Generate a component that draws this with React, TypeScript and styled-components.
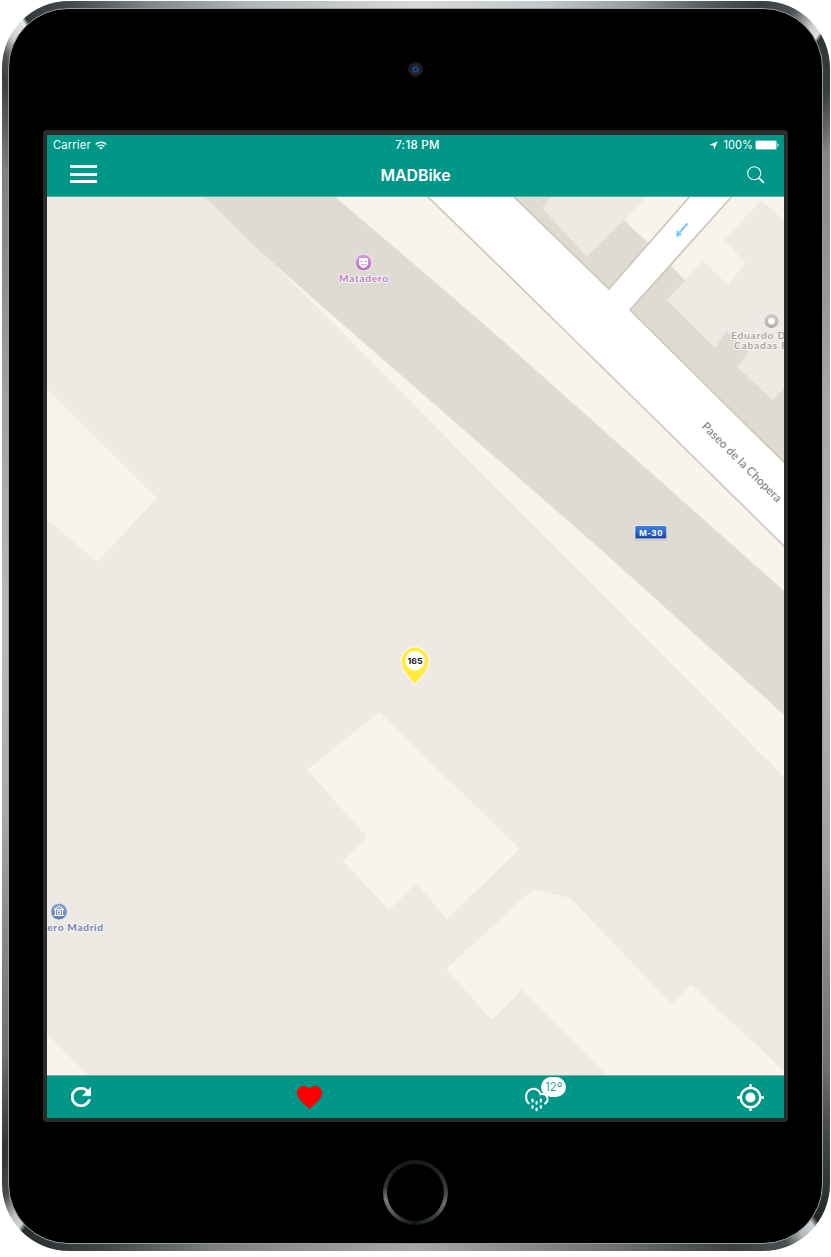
import React from "react";
import styled, { createGlobalStyle } from "styled-components";

const GlobalStyle = createGlobalStyle`
  html, body { margin: 0; background: #fff; }
  * { box-sizing: border-box; }
`;

const TEAL = "#009688";
const UI_FONT = `Inter, Roboto, "Liberation Sans", sans-serif`;

const Page = styled.main`
  width: 831px;
  height: 1257px;
  padding: 1px 1.5px 6px;
  overflow: hidden;
  background: #fff;
  font-family: ${UI_FONT};
`;

const Device = styled.div`
  width: 828px;
  height: 1250px;
  padding: 7px 6.5px;
  border-radius: 67px;
  background: conic-gradient(
    from 0deg at 50% 50%,
    #d6d8d9 0deg, #c4c7c9 12deg, #9a9ea0 19deg, #565b5e 25deg, #3a3f42 29deg,
    #4b5053 31.5deg, #c9ccce 33.4deg, #dfe2e3 34.2deg, #2f3437 34.5deg, #373c3f 37.5deg,
    #85898c 41deg, #a5a8aa 60deg, #b5b8ba 90deg, #9fa2a4 120deg, #6d7174 137deg,
    #3a3f42 142deg, #23282b 146deg, #d0d3d5 146.5deg, #b4b8ba 147.6deg, #4b5053 149deg,
    #3b4043 153deg, #6d7173 162deg, #a6a9aa 180deg, #7d8183 198deg, #3f4447 207deg,
    #272c2f 213deg, #d0d3d5 213.4deg, #c0c4c6 214.2deg, #454a4d 215.8deg, #2e3336 218deg,
    #6d7174 224deg, #a5a8aa 245deg, #b9bcbe 270deg, #9da1a3 300deg, #7d8184 318deg,
    #3a3f42 323deg, #4f5457 324.3deg, #cfd2d4 325.6deg, #e4e7e8 327deg, #33383b 327.3deg,
    #43484b 331deg, #84888b 337deg, #b4b7b9 345deg, #d6d8d9 360deg
  );
`;

const Glass = styled.div`
  height: 100%;
  border: 1px solid #9b9ea0;
  border-radius: 60px;
  background: #000;
  display: flex;
  flex-direction: column;
  align-items: center;
`;

const CameraArea = styled.div`
  height: 121px;
  padding-top: 53px;
  flex: none;
`;

const Camera = styled.div`
  width: 15px;
  height: 15px;
  border-radius: 50%;
  background: radial-gradient(circle, #0b1a3c 0 1px, #1f4fae 2px, #17263f 3.5px, #26292c 4.5px, #141618 6px, #1b1d1e 7px);
`;

const Bezel = styled.div`
  width: 745px;
  height: 992px;
  flex: none;
  padding: 5px 4px 4px;
  border-radius: 4px;
  background: #2b2b2b;
`;

const Screen = styled.div`
  width: 737px;
  height: 983px;
  display: flex;
  flex-direction: column;
  overflow: hidden;
  background: ${TEAL};
`;

const StatusBar = styled.div`
  height: 20px;
  padding: 0 5px 0 6px;
  display: grid;
  grid-template-columns: 1fr auto 1fr;
  align-items: center;
  color: #fff;
  font-size: 11.1px;
  letter-spacing: 0.2px;
  flex: none;
`;

const StatusGroup = styled.div<{ $end?: boolean }>`
  display: flex;
  align-items: center;
  gap: ${(p) => (p.$end ? "2px" : "4px")};
  justify-content: ${(p) => (p.$end ? "flex-end" : "flex-start")};
`;

const Clock = styled.span`
  font-weight: 500;
  font-size: 11.5px;
  letter-spacing: 0.3px;
  padding-left: 3px;
`;

const Percent = styled.span`
  margin-left: 4px;
  letter-spacing: 0;
`;

const NavBar = styled.header`
  height: 42px;
  flex: none;
  padding: 0 19px 3px;
  display: grid;
  grid-template-columns: 1fr auto 1fr;
  align-items: center;
  color: #fff;
  border-bottom: 1px solid #5faea4;
`;

const NavTitle = styled.h1`
  margin: 0;
  padding-top: 2px;
  font-size: 15.8px;
  font-weight: 600;
  letter-spacing: 0;
`;

const MenuButton = styled.button`
  width: 27px;
  height: 18px;
  margin: 0 0 0 4px;
  padding: 0;
  border: 0;
  background: none;
  display: flex;
  flex-direction: column;
  justify-content: space-between;
`;

const MenuLine = styled.span`
  width: 27px;
  height: 3px;
  background: #fff;
`;

const IconButton = styled.button<{ $end?: boolean }>`
  padding: 0;
  border: 0;
  background: none;
  display: flex;
  justify-self: ${(p) => (p.$end ? "end" : "start")};
`;

const MapView = styled.svg`
  display: block;
  width: 737px;
  height: 878px;
  flex: none;
`;

const ToolBar = styled.footer`
  height: 43px;
  flex: none;
  padding: 0 20px 0 24px;
  display: grid;
  grid-template-columns: 226px 228px auto 1fr;
  align-items: center;
  background: ${TEAL};
  border-top: 1px solid #6fb0a6;
`;

const WeatherButton = styled(IconButton)`
  position: relative;
  width: 41px;
  height: 42px;
  align-items: flex-start;
`;

const TempBadge = styled.span`
  position: absolute;
  top: 1px;
  right: 0;
  width: 25px;
  height: 19.5px;
  border-radius: 10px;
  background: #fff;
  color: ${TEAL};
  font: 300 12px/19.5px ${UI_FONT};
  text-align: center;
`;

const HomeArea = styled.div`
  flex: 1;
  padding-top: 38px;
`;

const HomeButton = styled.div`
  width: 65px;
  height: 65px;
  border-radius: 50%;
  padding: 4px;
  background: conic-gradient(#15181a 0deg, #1d2022 40deg, #3a3e41 85deg, #6b6f72 112deg, #3a3e41 140deg, #22282b 165deg, #101315 182deg, #24282b 200deg, #5c6063 235deg, #777b7e 255deg, #34383b 280deg, #1a1d1f 320deg, #15181a 360deg);
`;

const HomeFace = styled.div`
  height: 100%;
  border-radius: 50%;
  background: #000;
`;

const WifiIcon = () => (
  <svg width="12" height="9" viewBox="0 0 12 9" fill="none" stroke="#fff">
    <path d="M.7 3.4a7.6 7.6 0 0 1 10.6 0" strokeWidth="1.4" />
    <path d="M2.7 5.5a4.8 4.8 0 0 1 6.6 0" strokeWidth="1.4" />
    <path d="M6 8.8 4.1 6.9a2.8 2.8 0 0 1 3.8 0z" fill="#fff" stroke="none" />
  </svg>
);

const LocationArrow = () => (
  <svg width="9" height="9" viewBox="0 0 9 9">
    <path d="M8.8.2 5 8.8 4.6 4.5.2 4.1z" fill="#fff" />
  </svg>
);

const Battery = () => (
  <svg width="24" height="10" viewBox="0 0 24 10">
    <rect x=".4" y=".4" width="21.4" height="9.2" rx="1.8" fill="none" stroke="#fff" strokeOpacity=".65" strokeWidth=".7" />
    <rect x="1" y="1" width="20.2" height="8" rx="1.2" fill="#fff" />
    <path d="M22.5 3.4q1.2.4 1.2 1.6t-1.2 1.6z" fill="#fff" />
  </svg>
);

const SearchIcon = () => (
  <svg width="18" height="19" viewBox="0 -1 18 19" fill="none" stroke="#fff">
    <circle cx="7.2" cy="7.2" r="6.5" strokeWidth="1.1" />
    <path d="m11.8 11.8 5.1 5.1" strokeWidth="1.9" />
  </svg>
);

const RefreshIcon = () => (
  <svg width="20" height="20" viewBox="4 4 16 16">
    <path fill="#fff" stroke="#fff" strokeWidth=".3" d="M17.65 6.35C16.2 4.9 14.21 4 12 4c-4.42 0-7.99 3.58-7.99 8s3.57 8 7.99 8c3.73 0 6.84-2.55 7.73-6h-2.08c-.82 2.33-3.04 4-5.65 4-3.31 0-6-2.69-6-6s2.69-6 6-6c1.66 0 3.14.69 4.22 1.78L13 11h7V4l-2.35 2.35z" />
  </svg>
);

const HeartIcon = () => (
  <svg width="25" height="23" viewBox="2 3 20 18.35">
    <path fill="#f00" d="m12 21.35-1.45-1.32C5.4 15.36 2 12.28 2 8.5 2 5.42 4.42 3 7.5 3c1.74 0 3.41.81 4.5 2.09C13.09 3.81 14.76 3 16.5 3 19.58 3 22 5.42 22 8.5c0 3.78-3.4 6.86-8.55 11.54z" />
  </svg>
);

const RainIcon = () => (
  <svg width="26" height="26" viewBox="0 0 26 26" fill="none" stroke="#fff" strokeWidth="2" strokeLinecap="round">
    <path d="M4.6 17C2.4 15.6 1.2 12.8 1.2 9.9A7.3 7.3 0 0 1 15.5 7.2C19.5 6.3 22.6 8.6 22.6 12.1 22.6 14.3 21.3 16.2 19.4 17" strokeLinecap="butt" />
    <path strokeWidth="2.2" d="M7.5 12.7v1.7M7.5 19v1.7M11.6 15v1.7M11.6 21.5v1.7M15.8 12.7v1.7M15.8 19v1.7" />
  </svg>
);

const RainIconPlace = styled.span`
  display: block;
  padding-top: 11px;
`;

const LocateIcon = () => (
  <svg width="27" height="27" viewBox="0 0 27 27" fill="none" stroke="#fff" strokeWidth="2.3">
    <circle cx="13.5" cy="13.5" r="9.7" />
    <circle cx="13.5" cy="13.5" r="5" fill="#fff" stroke="none" />
    <path d="M13.5 0v4M13.5 23v4M0 13.5h4M23 13.5h4" />
  </svg>
);

const MapLabel = styled.text`
  font-family: Lato, "Open Sans", sans-serif;
  font-weight: 700;
  font-size: 10.2px;
  paint-order: stroke;
  stroke: #f7f4ef;
  stroke-width: 2px;
  stroke-linejoin: round;
`;

const StreetLabel = styled.text`
  font-family: Lato, "Open Sans", sans-serif;
  font-size: 11.8px;
  font-weight: 500;
  fill: #858585;
`;

const ShieldText = styled.text`
  font: 700 9.5px "Liberation Sans", sans-serif;
  text-anchor: middle;
`;

const PinText = styled.text`
  font: 700 7.6px Inter, "Liberation Sans", sans-serif;
  text-anchor: middle;
`;

const CREAM = "#f8f3eb";
const GROUND = "#eee9e2";
const PAVED = "#dedbd2";
const KERB = "#d0c7bc";

const CityMap = () => (
  <MapView viewBox="47 197 737 878">
    <defs>
      <linearGradient id="purple" x1="0" y1="0" x2="0" y2="1">
        <stop offset="0" stopColor="#d59fdb" />
        <stop offset="1" stopColor="#b673c1" />
      </linearGradient>
      <linearGradient id="blue" x1="0" y1="0" x2="0" y2="1">
        <stop offset="0" stopColor="#8fa5d4" />
        <stop offset="1" stopColor="#6079b5" />
      </linearGradient>
      <linearGradient id="grey" x1="0" y1="0" x2="0" y2="1">
        <stop offset="0" stopColor="#cfcdc9" />
        <stop offset="1" stopColor="#b2afaa" />
      </linearGradient>
      <linearGradient id="shield" x1="0" y1="0" x2="0" y2="1">
        <stop offset="0" stopColor="#3b82ee" />
        <stop offset="1" stopColor="#1f449c" />
      </linearGradient>
    </defs>
    <rect x="47" y="196" width="737" height="881" fill={GROUND} />

    <path fill={CREAM} d="M262 252 784 777V196H333z" />
    <path fill={PAVED} stroke="#e2decd" strokeWidth="1.2" d="M204 195 255 246 318 302 600 548 785 715V592.500L592 421 500 339 420 270 332 195z" />

    <path fill={PAVED} d="M513 196 609 289 691 196zM732 196 630 310 785 463V196z" />
    <path fill={CREAM} d="M647 196 624 220 648 243 691 196zM732 196 671 266 685 280 720 300 784 260V196z" />
    <path fill={GROUND} d="M551 196 542 208 587 257 624 220 648 196z" />
    <path fill={GROUND} d="M761 200 725 240 745 263 728 285 703 261 667 300 715 348 727 331 748 352 737 367 773 400 785 387V221z" />
    <path fill="#fff" stroke={KERB} strokeWidth="1.7" d="M426 195 500 267 656 420 786 548V464L741 420 630 310 734 194H692L609 289 512 195z" />

    <path fill={CREAM} d="M47 389 157 498 97 562 47 519zM47 1034 89 1076H47z" />
    <path fill={CREAM} d="M379 712 520 849 447 919 416 883 389 910 343 861 367 837 307 770z" />
    <path fill={CREAM} d="M533 889 570 898 672 1004 691 984 784 1071V1076H607L522 989 492 1020 446 969z" />

    <g fill="#76c8ff" stroke="#76c8ff">
      <path d="m687.5 223.5-8 9" strokeWidth="2" />
      <path d="m676 237 1-7 5 5z" stroke="none" />
    </g>

    <circle cx="363.5" cy="262.5" r="8.8" fill="#f7f0f5" />
    <circle cx="363.5" cy="262.5" r="8" fill="url(#purple)" />
    <path fill="#fff" d="M359 258.6q4.5-1.4 9 0v4.4c0 2.6-2 4.2-4.5 5.2-2.5-1-4.5-2.6-4.5-5.2z" />
    <path fill="none" stroke="#bf80ca" strokeWidth="1" d="M360.4 261.3h2.1M364.6 261.3h2.1M361.2 264.3q2.3 2 4.6 0" />
    <MapLabel x="339" y="282.4" fill="#bd7cc6" textLength="49">Matadero</MapLabel>

    <circle cx="771.5" cy="321" r="7.8" fill="#f4f2ee" />
    <circle cx="771.5" cy="321" r="7.2" fill="url(#grey)" />
    <circle cx="771.5" cy="321" r="3.3" fill="#fff" />
    <MapLabel x="731" y="339.4" fill="#a9a7a3" letterSpacing=".8">Eduardo Dato</MapLabel>
    <MapLabel x="734" y="349.4" fill="#a9a7a3" letterSpacing=".8">Cabadas Park</MapLabel>

    <StreetLabel transform="translate(701 427) rotate(45)" textLength="107.5">Paseo de la Chopera</StreetLabel>

    <rect x="634" y="524.5" width="33.5" height="16" rx="2" fill="#a9a79f" opacity=".6" />
    <rect x="634" y="524.5" width="33.5" height="15" rx="2" fill="#e9e8e4" />
    <rect x="635.3" y="526" width="31" height="12.5" rx="1.2" fill="url(#shield)" />
    <ShieldText x="650.8" y="535.6" fill="#fff" textLength="23.5">M-30</ShieldText>

    <path fill="#ffeb3b" stroke="#f8f5e6" strokeWidth="1.5" d="M415 685C410.5 679 400.9 671 400.9 661.2a14.1 14.1 0 0 1 28.2 0C429.1 671 419.5 679 415 685z" />
    <circle cx="415" cy="660.7" r="9.7" fill="#fff" />
    <PinText x="415" y="663.6" fill="#222" textLength="15" lengthAdjust="spacingAndGlyphs">165</PinText>

    <circle cx="59" cy="911.5" r="8.7" fill="#f3f1ee" />
    <circle cx="59" cy="911.5" r="8" fill="url(#blue)" />
    <path fill="none" stroke="#fff" strokeWidth="1" d="M54 909.5 59 906.5 64 909.5zM55.5 910v5M62.5 910v5M53.5 915.5h11M57.5 911h3v3h-3z" />
    <MapLabel x="103.8" y="931.2" fill="#6c82b8" textAnchor="end" letterSpacing=".65">Matadero Madrid</MapLabel>
  </MapView>
);

export default function App() {
  return (
    <Page>
      <GlobalStyle />
      <Device>
        <Glass>
          <CameraArea>
            <Camera />
          </CameraArea>
          <Bezel>
            <Screen>
              <StatusBar>
                <StatusGroup>
                  <span>Carrier</span>
                  <WifiIcon />
                </StatusGroup>
                <Clock>7:18 PM</Clock>
                <StatusGroup $end>
                  <LocationArrow />
                  <Percent>100%</Percent>
                  <Battery />
                </StatusGroup>
              </StatusBar>
              <NavBar>
                <MenuButton aria-label="Menu">
                  <MenuLine />
                  <MenuLine />
                  <MenuLine />
                </MenuButton>
                <NavTitle>MADBike</NavTitle>
                <IconButton $end aria-label="Search">
                  <SearchIcon />
                </IconButton>
              </NavBar>
              <CityMap />
              <ToolBar>
                <IconButton aria-label="Refresh">
                  <RefreshIcon />
                </IconButton>
                <IconButton aria-label="Favourites">
                  <HeartIcon />
                </IconButton>
                <WeatherButton aria-label="Weather">
                  <RainIconPlace>
                    <RainIcon />
                  </RainIconPlace>
                  <TempBadge>12º</TempBadge>
                </WeatherButton>
                <IconButton $end aria-label="Locate">
                  <LocateIcon />
                </IconButton>
              </ToolBar>
            </Screen>
          </Bezel>
          <HomeArea>
            <HomeButton>
              <HomeFace />
            </HomeButton>
          </HomeArea>
        </Glass>
      </Device>
    </Page>
  );
}
